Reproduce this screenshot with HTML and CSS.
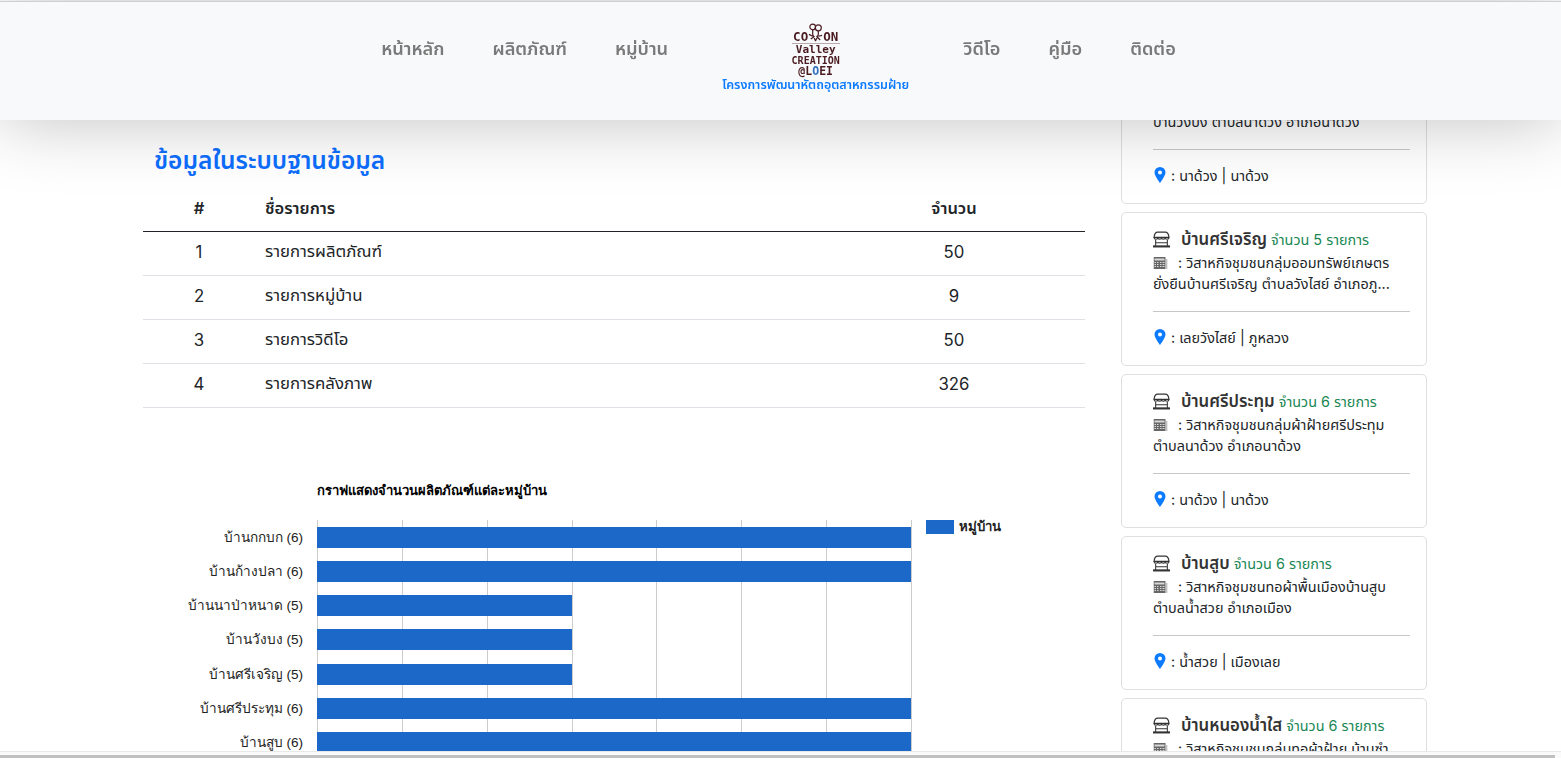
FILE: index.html
```html
<!DOCTYPE html>
<html lang="th">
<head>
  <meta charset="UTF-8" />
  <title>Cotton Valley Creation @Loei</title>
  <link rel="stylesheet" href="styles.css">
</head>
<body>
  <!-- fixed navbar -->
  <nav class="navbar">
    <a class="nav-link">หน้าหลัก</a>
    <a class="nav-link">ผลิตภัณฑ์</a>
    <a class="nav-link">หมู่บ้าน</a>
    <div class="brand">
      <div class="logo">
        <div class="logo-line logo-cotton">CO<svg class="logo-tree" viewBox="0 0 16 20"><g fill="none" stroke="#4a1c22" stroke-width="1.3"><circle cx="5" cy="4" r="3"/><circle cx="11" cy="5" r="3.200"/><path d="M5 7v5l3 7M11 8v4l-3 7M1 12l4 2M15 13l-4 1M3 17l4-3M13 18l-4-4"/></g></svg>ON</div>
        <div class="logo-line logo-valley">Valley</div>
        <div class="logo-line logo-creation">CREATION</div>
        <div class="logo-line logo-loei">@L<span class="logo-o">O</span>EI</div>
      </div>
      <div class="brand-text">โครงการพัฒนาหัตถอุตสาหกรรมฝ้าย</div>
    </div>
    <a class="nav-link">วิดีโอ</a>
    <a class="nav-link">คู่มือ</a>
    <a class="nav-link">ติดต่อ</a>
  </nav>

  <div class="container">
    <!-- LEFT: table + chart -->
    <main class="left-panel">
      <h2 class="page-title">ข้อมูลในระบบฐานข้อมูล</h2>
      <table class="data-table">
        <thead>
          <tr><th class="col-num">#</th><th class="col-name">ชื่อรายการ</th><th class="col-count">จำนวน</th></tr>
        </thead>
        <tbody>
          <tr><td class="col-num">1</td><td class="col-name">รายการผลิตภัณฑ์</td><td class="col-count">50</td></tr>
          <tr><td class="col-num">2</td><td class="col-name">รายการหมู่บ้าน</td><td class="col-count">9</td></tr>
          <tr><td class="col-num">3</td><td class="col-name">รายการวิดีโอ</td><td class="col-count">50</td></tr>
          <tr><td class="col-num">4</td><td class="col-name">รายการคลังภาพ</td><td class="col-count">326</td></tr>
        </tbody>
      </table>

      <div class="chart">
        <div class="chart-title">กราฟแสดงจำนวนผลิตภัณฑ์แต่ละหมู่บ้าน</div>
        <div class="chart-body">
          <div class="chart-labels">
            <div class="chart-label">บ้านกกบก (6)</div>
            <div class="chart-label">บ้านก้างปลา (6)</div>
            <div class="chart-label">บ้านนาป่าหนาด (5)</div>
            <div class="chart-label">บ้านวังบง (5)</div>
            <div class="chart-label">บ้านศรีเจริญ (5)</div>
            <div class="chart-label">บ้านศรีประทุม (6)</div>
            <div class="chart-label">บ้านสูบ (6)</div>
          </div>
          <div class="chart-plot">
            <div class="bar-row"><div class="bar" style="width:100%"></div></div>
            <div class="bar-row"><div class="bar" style="width:100%"></div></div>
            <div class="bar-row"><div class="bar" style="width:42.9%"></div></div>
            <div class="bar-row"><div class="bar" style="width:42.9%"></div></div>
            <div class="bar-row"><div class="bar" style="width:42.9%"></div></div>
            <div class="bar-row"><div class="bar" style="width:100%"></div></div>
            <div class="bar-row"><div class="bar" style="width:100%"></div></div>
          </div>
          <div class="legend"><span class="legend-swatch"></span>หมู่บ้าน</div>
        </div>
      </div>
    </main>

    <!-- RIGHT: village cards -->
    <aside class="right-panel">
      <div class="card">
        <div class="card-title"><svg class="icon-shop" viewBox="0 0 16 16"><use href="#shop"/></svg><b>บ้านวังบง</b> <span class="card-count">จำนวน 5 รายการ</span></div>
        <div class="card-desc"><svg class="icon-news" viewBox="0 0 14 12"><use href="#news"/></svg>: วิสาหกิจชุมชนกลุ่มทอผ้าฝ้าย<br>บ้านวังบง ตำบลนาด้วง อำเภอนาด้วง</div>
        <hr class="card-line">
        <div class="card-place"><svg class="icon-pin" viewBox="0 0 12 16"><use href="#pin"/></svg>: นาด้วง | นาด้วง</div>
      </div>
      <div class="card">
        <div class="card-title"><svg class="icon-shop" viewBox="0 0 16 16"><use href="#shop"/></svg><b>บ้านศรีเจริญ</b> <span class="card-count">จำนวน 5 รายการ</span></div>
        <div class="card-desc"><svg class="icon-news" viewBox="0 0 14 12"><use href="#news"/></svg>: วิสาหกิจชุมชนกลุ่มออมทรัพย์เกษตร<br>ยั่งยืนบ้านศรีเจริญ ตำบลวังไสย์ อำเภอภู...</div>
        <hr class="card-line">
        <div class="card-place"><svg class="icon-pin" viewBox="0 0 12 16"><use href="#pin"/></svg>: เลยวังไสย์ | ภูหลวง</div>
      </div>
      <div class="card">
        <div class="card-title"><svg class="icon-shop" viewBox="0 0 16 16"><use href="#shop"/></svg><b>บ้านศรีประทุม</b> <span class="card-count">จำนวน 6 รายการ</span></div>
        <div class="card-desc"><svg class="icon-news" viewBox="0 0 14 12"><use href="#news"/></svg>: วิสาหกิจชุมชนกลุ่มผ้าฝ้ายศรีประทุม<br>ตำบลนาด้วง อำเภอนาด้วง</div>
        <hr class="card-line">
        <div class="card-place"><svg class="icon-pin" viewBox="0 0 12 16"><use href="#pin"/></svg>: นาด้วง | นาด้วง</div>
      </div>
      <div class="card">
        <div class="card-title"><svg class="icon-shop" viewBox="0 0 16 16"><use href="#shop"/></svg><b>บ้านสูบ</b> <span class="card-count">จำนวน 6 รายการ</span></div>
        <div class="card-desc"><svg class="icon-news" viewBox="0 0 14 12"><use href="#news"/></svg>: วิสาหกิจชุมชนทอผ้าพื้นเมืองบ้านสูบ<br>ตำบลน้ำสวย อำเภอเมือง</div>
        <hr class="card-line">
        <div class="card-place"><svg class="icon-pin" viewBox="0 0 12 16"><use href="#pin"/></svg>: น้ำสวย | เมืองเลย</div>
      </div>
      <div class="card">
        <div class="card-title"><svg class="icon-shop" viewBox="0 0 16 16"><use href="#shop"/></svg><b>บ้านหนองน้ำใส</b> <span class="card-count">จำนวน 6 รายการ</span></div>
        <div class="card-desc"><svg class="icon-news" viewBox="0 0 14 12"><use href="#news"/></svg>: วิสาหกิจชุมชนกลุ่มทอผ้าฝ้าย บ้านซำ</div>
      </div>
    </aside>
  </div>

  <div class="scrollbar"><div class="scrollbar-thumb"></div></div>

  <!-- shared icons -->
  <svg class="icon-defs" aria-hidden="true">
    <symbol id="shop" viewBox="0 0 16 16">
      <path d="M4.500 1h7c1.800 0 3.300 2.200 3.500 5H1C1.200 3.200 2.700 1 4.500 1z" fill="none" stroke="currentColor" stroke-width="1.100"/>
      <path d="M1 6c0 2.200 3.500 2.200 3.500 0 0 2.200 3.500 2.200 3.500 0 0 2.200 3.500 2.200 3.500 0 0 2.200 3.500 2.200 3.500 0" fill="none" stroke="currentColor" stroke-width="1.100"/>
      <path d="M2.500 8.500v5.500M13.500 8.500v5.500M2.500 11h11" fill="none" stroke="currentColor" stroke-width="1"/>
      <path d="M0 13.500h16V15.500H0z" fill="currentColor"/>
    </symbol>
    <symbol id="news" viewBox="0 0 14 12">
      <path d="M0 0h12v12H0z" fill="currentColor"/>
      <path d="M1 1.500h10v2H1zM1 5h1.500v1H1zM3.500 5H5v1H3.500zM1 7h1.500v1H1zM3.500 7H5v1H3.500zM1 9h1.500v1H1zM3.500 9H5v1H3.500zM6.500 5h1.500v1H6.500zM9 5h2v1H9zM6.500 7h1.500v1H6.500zM9 7h2v1H9zM6.500 9h1.500v1H6.500zM9 9h2v1H9z" fill="#fff" fill-opacity="0.75"/>
      <path d="M12.800 2H14v10h-1.200z" fill="currentColor" fill-opacity="0.6"/>
    </symbol>
    <symbol id="pin" viewBox="0 0 12 16">
      <path fill-rule="evenodd" d="M6 0a5.500 5.500 0 0 1 5.500 5.500C11.500 9 6 16 6 16S.5 9 .5 5.500A5.500 5.500 0 0 1 6 0zm0 3.500a2 2 0 1 0 0 4 2 2 0 0 0 0-4z" fill="currentColor"/>
    </symbol>
  </svg>
</body>
</html>
```

FILE: styles.css
```css
html, body {
  margin: 0;
  padding: 0;
  height: 758px;
  overflow: hidden;
}

body {
  font-family: Inter, "Noto Sans Thai", "Noto Sans", sans-serif;
  font-size: 15px;
  color: #212529;
  background: #fff;
}

.navbar {
  position: fixed;
  top: 1px;
  left: 0;
  right: 0;
  height: 119px;
  display: flex;
  justify-content: center;
  align-items: center;
  gap: 48px;
  padding: 0 4px 24px 0;
  box-sizing: border-box;
  background: #f8f9fa;
  border-top: 1px solid #d0d0d0;
  box-shadow: 0 0 70px rgba(0,0,0,0.25);
  z-index: 10;
}

.nav-link {
  font-size: 18.2px;
  font-weight: 600;
  color: #7a7a7a;
}

.brand {
  margin: 0 6px;
  display: flex;
  flex-direction: column;
  align-items: center;
  padding-top: 18px;
}

.logo {
  color: #4a1c22;
  font-family: "DejaVu Sans Mono", monospace;
  font-weight: bold;
  text-align: center;
}

.logo-line {
  line-height: 11px;
  white-space: nowrap;
}

.logo-cotton {
  font-size: 12.5px;
  padding-bottom: 1px;
  border-bottom: 1px solid #b9a9a9;
}
.logo-valley { font-size: 11px; }
.logo-creation { font-size: 10px; }
.logo-loei { font-size: 11.5px; }
.logo-o { color: #2f6fc0; }

.logo-tree {
  width: 15px;
  height: 19px;
  vertical-align: -1px;
}

.brand-text {
  font-size: 12.5px;
  font-weight: 600;
  color: #0d7bff;
  white-space: nowrap;
  line-height: 16px;
}

.container {
  display: flex;
  gap: 36px;
  padding-left: 143px;
}

.left-panel {
  width: 942px;
  padding-top: 140px;
}

.page-title {
  margin: 0 0 10px 11px;
  font-size: 24.5px;
  line-height: 40px;
  font-weight: 600;
  color: #0d6efd;
}

.data-table {
  width: 100%;
  border-collapse: collapse;
}

.data-table th, .data-table td {
  height: 40px;
  padding: 0 0 3px;
  font-size: 16.8px;
  border-bottom: 1px solid #dee2e6;
}

.data-table th {
  font-weight: 600;
  font-size: 16.5px;
  height: 36px;
  padding-bottom: 5px;
  border-bottom-color: #212529;
}

.col-num { width: 112px; text-align: center; }
.data-table .col-name { padding-left: 10px; text-align: left; }
.col-count { width: 262px; text-align: center; }

.chart {
  margin-top: 74px;
  font-family: "Liberation Sans", Arial, sans-serif;
  font-size: 13.6px;
}

.chart-title {
  margin-left: 174px;
  font-size: 13.05px;
  font-weight: bold;
  color: #000;
  line-height: 18px;
}

.chart-body {
  display: flex;
  margin-top: 20px;
}

.chart-labels {
  width: 160px;
  margin-right: 14px;
  padding-top: 7px;
  text-align: right;
  color: #222;
}

.chart-label {
  height: 34.17px;
  line-height: 22px;
}

.chart-plot {
  width: 595px;
  padding-top: 7px;
  background: repeating-linear-gradient(to right, #ccc 0, #ccc 1px, transparent 1px, transparent 84.86px);
  border-right: 1px solid #ccc;
  box-sizing: border-box;
}

.bar-row {
  height: 34.17px;
}

.bar {
  height: 21px;
  background: #1c68c9;
}

.legend {
  margin-left: 14px;
  align-self: flex-start;
  display: flex;
  align-items: center;
  gap: 5px;
  font-size: 13.2px;
  font-weight: bold;
  line-height: 14px;
  color: #222;
}

.legend-swatch {
  width: 28px;
  height: 14px;
  background: #1c68c9;
}

.right-panel {
  width: 306px;
  padding-top: 50px;
  display: flex;
  flex-direction: column;
  gap: 8px;
}

.card {
  box-sizing: border-box;
  height: 154px;
  padding: 14px 16px 0 31px;
  background: #fff;
  border: 1px solid #dfdfdf;
  border-radius: 5px;
  font-size: 14.4px;
  line-height: 21px;
  flex: none;
  white-space: nowrap;
}

.card-title {
  line-height: 24px;
}

.card-title b {
  font-weight: 600;
  font-size: 16.8px;
  color: #333;
}

.card-count {
  font-size: 14.4px;
  color: #198754;
}

.icon-shop {
  width: 17px;
  height: 17px;
  margin-right: 11px;
  vertical-align: -3px;
  color: #333;
}

.icon-news {
  width: 15px;
  height: 12px;
  margin-right: 10px;
  vertical-align: -1px;
  color: #666;
}

.icon-pin {
  width: 12px;
  height: 16px;
  margin: 0 5px 0 1px;
  vertical-align: -2px;
  color: #0d7bff;
}

.card-line {
  margin: 17px 0 15px;
  border: 0;
  border-top: 1px solid #c6c7c8;
}

.icon-defs {
  display: none;
}

.scrollbar {
  position: fixed;
  left: 0;
  right: 0;
  bottom: 0;
  height: 7px;
  box-sizing: border-box;
  padding: 3px 6px 0 0;
  background: #fafafa;
  border-top: 1px solid #e8e8e8;
  z-index: 20;
}

.scrollbar-thumb {
  height: 3px;
  background: #c1c1c1;
}
```
